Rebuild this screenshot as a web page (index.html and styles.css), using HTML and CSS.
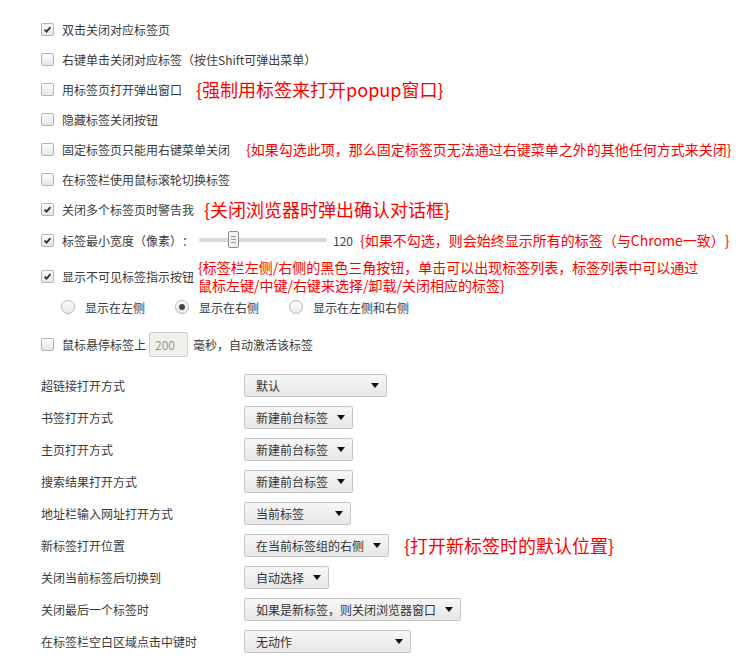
FILE: index.html
```html
<!DOCTYPE html>
<html lang="zh-CN">
<head>
    <meta charset="UTF-8">
    <title>标签设置</title>
    <link rel="stylesheet" href="styles.css">
</head>
<body>
    <div class="page">
        <div class="options">
            <div class="opt">
                <span class="box checked"><svg viewBox="0 0 13 13"><path d="M3 6.6 L5.4 9 L10 3.6"/></svg></span>
                <span>双击关闭对应标签页</span>
            </div>
            <div class="opt">
                <span class="box"></span>
                <span>右键单击关闭对应标签（按住Shift可弹出菜单）</span>
            </div>
            <div class="opt">
                <span class="box"></span>
                <span>用标签页打开弹出窗口</span>
                <span class="note big n-popup">{强制用标签来打开popup窗口}</span>
            </div>
            <div class="opt">
                <span class="box"></span>
                <span>隐藏标签关闭按钮</span>
            </div>
            <div class="opt">
                <span class="box"></span>
                <span>固定标签页只能用右键菜单关闭</span>
                <span class="note n-pinned">{如果勾选此项，那么固定标签页无法通过右键菜单之外的其他任何方式来关闭}</span>
            </div>
            <div class="opt">
                <span class="box"></span>
                <span>在标签栏使用鼠标滚轮切换标签</span>
            </div>
            <div class="opt">
                <span class="box checked"><svg viewBox="0 0 13 13"><path d="M3 6.6 L5.4 9 L10 3.6"/></svg></span>
                <span>关闭多个标签页时警告我</span>
                <span class="note big n-warn">{关闭浏览器时弹出确认对话框}</span>
            </div>
            <div class="opt slider-row">
                <span class="box checked"><svg viewBox="0 0 13 13"><path d="M3 6.6 L5.4 9 L10 3.6"/></svg></span>
                <span>标签最小宽度（像素）：</span>
                <div class="slider">
                    <div class="thumb"><i></i><i></i><i></i></div>
                </div>
                <span class="slider-val">120</span>
                <span class="note n-width">{如果不勾选，则会始终显示所有的标签（与Chrome一致）}</span>
            </div>
            <div class="opt tall">
                <span class="box checked"><svg viewBox="0 0 13 13"><path d="M3 6.6 L5.4 9 L10 3.6"/></svg></span>
                <span>显示不可见标签指示按钮</span>
                <span class="note n-list">{标签栏左侧/右侧的黑色三角按钮，单击可以出现标签列表，标签列表中可以通过<br>鼠标左键/中键/右键来选择/卸载/关闭相应的标签}</span>
            </div>
            <div class="radios">
                <label class="radio"><span class="dot"></span>显示在左侧</label>
                <label class="radio"><span class="dot on"></span>显示在右侧</label>
                <label class="radio"><span class="dot"></span>显示在左侧和右侧</label>
            </div>
            <div class="opt hover-row">
                <span class="box"></span>
                <span>鼠标悬停标签上</span>
                <span class="num">200</span>
                <span>毫秒，自动激活该标签</span>
            </div>
        </div>

        <div class="selects">
            <div class="sel-row">
                <span class="sel-label">超链接打开方式</span>
                <div class="select w-143"><span>默认</span><b class="arrow"></b></div>
            </div>
            <div class="sel-row">
                <span class="sel-label">书签打开方式</span>
                <div class="select"><span>新建前台标签</span><b class="arrow"></b></div>
            </div>
            <div class="sel-row">
                <span class="sel-label">主页打开方式</span>
                <div class="select"><span>新建前台标签</span><b class="arrow"></b></div>
            </div>
            <div class="sel-row">
                <span class="sel-label">搜索结果打开方式</span>
                <div class="select"><span>新建前台标签</span><b class="arrow"></b></div>
            </div>
            <div class="sel-row">
                <span class="sel-label">地址栏输入网址打开方式</span>
                <div class="select w-107"><span>当前标签</span><b class="arrow"></b></div>
            </div>
            <div class="sel-row">
                <span class="sel-label">新标签打开位置</span>
                <div class="select"><span>在当前标签组的右侧</span><b class="arrow"></b></div>
                <span class="note big n-pos">{打开新标签时的默认位置}</span>
            </div>
            <div class="sel-row">
                <span class="sel-label">关闭当前标签后切换到</span>
                <div class="select"><span>自动选择</span><b class="arrow"></b></div>
            </div>
            <div class="sel-row">
                <span class="sel-label">关闭最后一个标签时</span>
                <div class="select"><span>如果是新标签，则关闭浏览器窗口</span><b class="arrow"></b></div>
            </div>
            <div class="sel-row">
                <span class="sel-label">在标签栏空白区域点击中键时</span>
                <div class="select w-167"><span>无动作</span><b class="arrow"></b></div>
            </div>
        </div>
    </div>
</body>
</html>
```

FILE: styles.css
```css
* {
    box-sizing: border-box;
    margin: 0;
    padding: 0;
}

body {
    font-family: "Noto Sans CJK SC", "Noto Sans", sans-serif;
    font-size: 12px;
    color: #3a3a3a;
    background-color: #fff;
    text-spacing-trim: space-all;
}

.page {
    padding: 14px 0 0 41px;
}

.options {
    display: flex;
    flex-direction: column;
}

.opt {
    display: flex;
    align-items: center;
    height: 30px;
    white-space: nowrap;
}

.box {
    width: 13px;
    height: 13px;
    border: 1px solid #b4b4b4;
    border-radius: 2px;
    background: linear-gradient(#fdfdfd, #e6e6e6);
    margin-right: 8px;
    flex-shrink: 0;
    display: flex;
}

.box svg {
    width: 11px;
    height: 11px;
}

.box svg path {
    fill: none;
    stroke: #333;
    stroke-width: 2.2;
}

.note {
    color: #f00;
    font-size: 14px;
    line-height: 18px;
    margin-left: 15px;
}

.note.big {
    font-size: 18px;
}

.n-popup { margin-left: 14px; }
.n-pinned { margin-left: 16px; }
.n-warn { margin-left: 10px; }
.n-width { margin-left: 7px; }
.n-list { margin-left: 4px; }
.n-pos { margin-left: 15px; }

.slider-row {
    height: 32px;
}

.slider {
    position: relative;
    width: 128px;
    height: 4px;
    margin-left: 5px;
    background: #dcdad5;
    border-radius: 2px;
}

.thumb {
    position: absolute;
    left: 29px;
    top: -7px;
    width: 11px;
    height: 17px;
    border: 1px solid #8e8e8e;
    border-radius: 2px;
    background: #f3f2ef;
    display: flex;
    flex-direction: column;
    justify-content: center;
    align-items: center;
    gap: 2px;
}

.thumb i {
    display: block;
    width: 5px;
    height: 1px;
    background: #999;
}

.slider-val {
    margin-left: 6px;
    color: #444;
}

.tall {
    height: 40px;
}

.radios {
    display: flex;
    align-items: center;
    height: 22px;
    padding-left: 20px;
}

.radio {
    display: flex;
    align-items: center;
    margin-right: 30px;
}

.dot {
    width: 14px;
    height: 14px;
    border: 1px solid #b9b9b9;
    border-radius: 50%;
    background: linear-gradient(#fdfdfd, #e8e8e8);
    margin-right: 10px;
    display: flex;
    align-items: center;
    justify-content: center;
}

.dot.on::after {
    content: '';
    width: 6px;
    height: 6px;
    border-radius: 50%;
    background: #444;
}

.hover-row {
    height: 28px;
    margin-top: 12px;
}

.num {
    width: 39px;
    height: 25px;
    margin: 0 5px 0 3px;
    padding-left: 5px;
    line-height: 23px;
    border: 1px solid #cfcfcf;
    border-radius: 2px;
    background: #f0f0eb;
    color: #999;
}

.selects {
    margin-top: 11px;
    display: flex;
    flex-direction: column;
}

.sel-row {
    display: flex;
    align-items: center;
    height: 32px;
    white-space: nowrap;
}

.sel-label {
    width: 203px;
}

.select {
    display: flex;
    align-items: center;
    justify-content: space-between;
    gap: 9px;
    height: 23px;
    padding: 0 7px 0 11px;
    border: 1px solid #c6c6c6;
    border-radius: 2px;
    background: linear-gradient(#f7f7f7, #e6e6e6);
    color: #333;
}

.w-107 { width: 107px; }
.w-143 { width: 143px; }
.w-167 { width: 167px; }

.arrow {
    width: 0;
    height: 0;
    border-left: 4px solid transparent;
    border-right: 4px solid transparent;
    border-top: 5px solid #111;
}
```
